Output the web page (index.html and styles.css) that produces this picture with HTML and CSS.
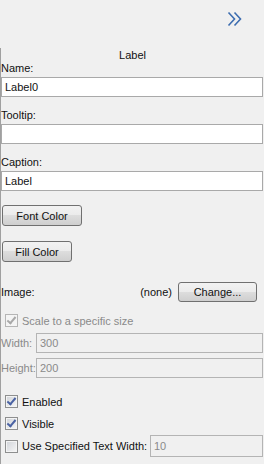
FILE: index.html
```html
<!DOCTYPE html>
<html lang="en">
<head>
    <meta charset="UTF-8">
    <title>Label Properties</title>
    <link rel="stylesheet" href="styles.css">
</head>
<body>
    <div class="toolbar">
        <svg class="collapse" width="16" height="16" viewBox="0 0 16 16">
            <path d="M1.5 1.5 L7.5 8 L1.5 14.5 M7.5 1.5 L13.5 8 L7.5 14.5" fill="none" stroke="#3d6db0" stroke-width="1.6"/>
        </svg>
    </div>

    <div class="panel">
        <div class="title">Label</div>

        <div class="field-label first">Name:</div>
        <div class="text-input">Label0</div>

        <div class="field-label">Tooltip:</div>
        <div class="text-input"></div>

        <div class="field-label">Caption:</div>
        <div class="text-input">Label</div>

        <button class="btn btn-font">Font Color</button>
        <button class="btn btn-fill">Fill Color</button>

        <div class="image-row">
            <span class="image-label">Image:</span>
            <span class="image-value">(none)</span>
            <button class="btn btn-change">Change...</button>
        </div>

        <div class="check-row scale disabled">
            <span class="cb checked"></span>
            <span>Scale to a specific size</span>
        </div>

        <div class="size-grid">
            <span class="size-label">Width:</span>
            <div class="text-input disabled">300</div>
            <span class="size-label">Height:</span>
            <div class="text-input disabled">200</div>
        </div>

        <div class="check-row enabled-row">
            <span class="cb checked"></span>
            <span>Enabled</span>
        </div>
        <div class="check-row visible-row">
            <span class="cb checked"></span>
            <span>Visible</span>
        </div>
        <div class="check-row width-row">
            <span class="cb"></span>
            <span class="width-text">Use Specified Text Width:</span>
            <div class="text-input disabled small">10</div>
        </div>
    </div>
</body>
</html>
```

FILE: styles.css
```css
body {
    margin: 0;
    background: #f0f0f0;
    font-family: "Liberation Sans", Arial, sans-serif;
    font-size: 11px;
    color: #111;
}
.toolbar {
    height: 48px;
    display: flex;
    justify-content: flex-end;
    align-items: flex-start;
}
.collapse {
    margin: 11px 21px 0 0;
}
.panel {
    border-left: 1px solid #a0a0a0;
    padding: 1px 1px 12px 0;
    min-height: 403px;
}
.title {
    text-align: center;
    line-height: 13px;
    padding-left: 1px;
}
.field-label {
    line-height: 13px;
    margin-top: 12px;
}
.field-label.first {
    margin-top: 0;
}
.text-input {
    height: 18px;
    line-height: 18px;
    border: 1px solid #a9a9a9;
    background: #fff;
    padding: 0 3px;
    margin-top: 2px;
}
.text-input.disabled {
    background: #f0f0f0;
    border-color: #b4b4b4;
    color: #8a8a8a;
    margin-top: 0;
}
.btn {
    display: block;
    font-family: inherit;
    font-size: 11px;
    color: #111;
    height: 21px;
    padding: 0;
    border: 1px solid #707070;
    border-radius: 3px;
    background: linear-gradient(#f2f2f2 0%, #ebebeb 50%, #dddddd 50%, #cfcfcf 100%);
}
.btn-font {
    width: 80px;
    margin: 14px 0 0 1px;
}
.btn-fill {
    width: 70px;
    margin: 15px 0 0 1px;
}
.image-row {
    display: flex;
    align-items: center;
    margin-top: 20px;
    height: 20px;
}
.image-label {
    flex: 1;
}
.image-value {
    margin-right: 6px;
}
.btn-change {
    width: 79px;
    height: 20px;
    margin-right: 6px;
}
.check-row {
    display: flex;
    align-items: center;
    gap: 4px;
    padding-left: 4px;
    height: 13px;
    white-space: nowrap;
}
.check-row.disabled {
    color: #8a8a8a;
}
.scale {
    margin-top: 12px;
}
.enabled-row {
    margin-top: 17px;
}
.visible-row {
    margin-top: 9px;
}
.width-row {
    margin-top: 5px;
    height: 22px;
}
.cb {
    flex-shrink: 0;
    width: 11px;
    height: 11px;
    border: 1px solid #8e8f8f;
    background: linear-gradient(135deg, #d0d3d8, #f7f7f7);
    box-shadow: inset 0 0 0 1px #f4f4f4;
    position: relative;
}
.cb.checked::after {
    content: "";
    position: absolute;
    left: 3px;
    top: 0px;
    width: 3px;
    height: 7px;
    border: solid #4a62a3;
    border-width: 0 2px 2px 0;
    transform: rotate(40deg);
}
.disabled .cb {
    border-color: #b5b5b5;
    background: #f4f4f4;
}
.disabled .cb.checked::after {
    border-color: #a8a8a8;
}
.size-grid {
    display: grid;
    grid-template-columns: 35px 1fr;
    row-gap: 5px;
    align-items: center;
    margin-top: 6px;
}
.size-label {
    color: #8a8a8a;
}
.width-text {
    flex-shrink: 0;
    width: 124px;
}
.text-input.small {
    flex: 1;
    min-width: 0;
    height: 20px;
    line-height: 20px;
}
```
